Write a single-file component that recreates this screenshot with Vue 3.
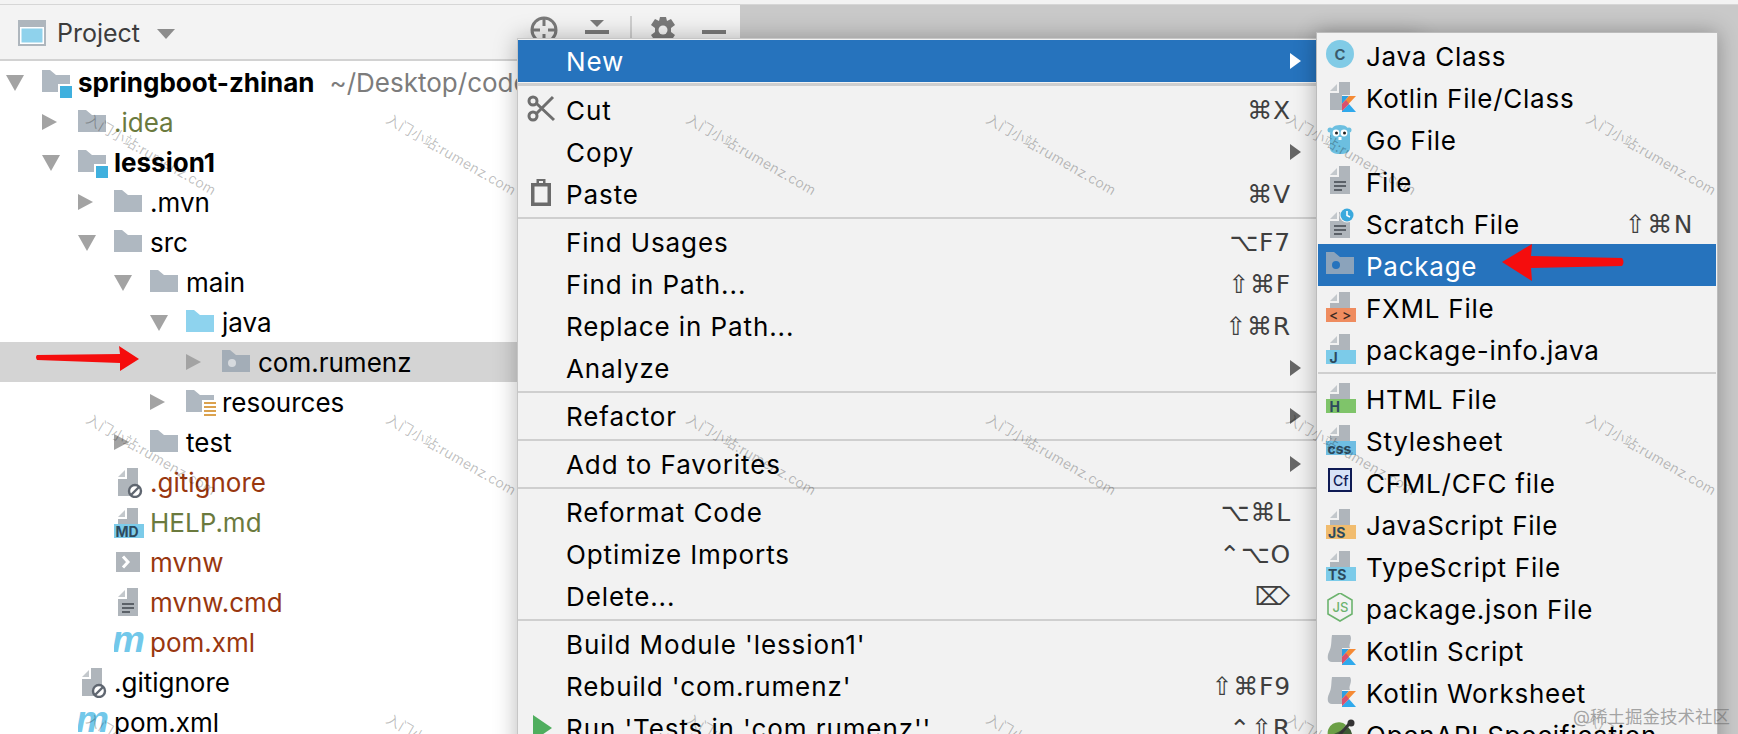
<script setup>
const tree = [
  { label: 'springboot-zhinan', depth: 0, arrow: 'down', icon: 'i-module', tone: 'strong', hint: '~/Desktop/code/springboot-zhinan' },
  { label: '.idea', depth: 1, arrow: 'right', icon: 'i-folder', tone: 'olive' },
  { label: 'lession1', depth: 1, arrow: 'down', icon: 'i-module', tone: 'strong' },
  { label: '.mvn', depth: 2, arrow: 'right', icon: 'i-folder' },
  { label: 'src', depth: 2, arrow: 'down', icon: 'i-folder' },
  { label: 'main', depth: 3, arrow: 'down', icon: 'i-folder' },
  { label: 'java', depth: 4, arrow: 'down', icon: 'i-folder-blue' },
  { label: 'com.rumenz', depth: 5, arrow: 'right', icon: 'i-package', selected: true },
  { label: 'resources', depth: 4, arrow: 'right', icon: 'i-resources' },
  { label: 'test', depth: 3, arrow: 'right', icon: 'i-folder' },
  { label: '.gitignore', depth: 2, icon: 'i-ignore', tone: 'rust' },
  { label: 'HELP.md', depth: 2, icon: 'i-md', tone: 'olive' },
  { label: 'mvnw', depth: 2, icon: 'i-shell', tone: 'rust' },
  { label: 'mvnw.cmd', depth: 2, icon: 'i-file', tone: 'rust' },
  { label: 'pom.xml', depth: 2, icon: 'i-maven', tone: 'rust' },
  { label: '.gitignore', depth: 1, icon: 'i-ignore' },
  { label: 'pom.xml', depth: 1, icon: 'i-maven' }
]

const menu = [
  { label: 'New', sub: true, active: true },
  { sep: true, first: true },
  { label: 'Cut', key: '⌘X', icon: 'i-cut' },
  { label: 'Copy', sub: true },
  { label: 'Paste', key: '⌘V', icon: 'i-paste' },
  { sep: true },
  { label: 'Find Usages', key: '⌥F7' },
  { label: 'Find in Path...', key: '⇧⌘F' },
  { label: 'Replace in Path...', key: '⇧⌘R' },
  { label: 'Analyze', sub: true },
  { sep: true },
  { label: 'Refactor', sub: true },
  { sep: true },
  { label: 'Add to Favorites', sub: true },
  { sep: true },
  { label: 'Reformat Code', key: '⌥⌘L' },
  { label: 'Optimize Imports', key: '⌃⌥O' },
  { label: 'Delete...', key: '⌦' },
  { sep: true },
  { label: "Build Module 'lession1'" },
  { label: "Rebuild 'com.rumenz'", key: '⇧⌘F9' },
  { label: "Run 'Tests in 'com.rumenz''", key: '⌃⇧R', icon: 'i-run' }
]

const submenu = [
  { label: 'Java Class', icon: 'i-class' },
  { label: 'Kotlin File/Class', icon: 'i-kotlin' },
  { label: 'Go File', icon: 'i-go' },
  { label: 'File', icon: 'i-file' },
  { label: 'Scratch File', icon: 'i-scratch', key: '⇧⌘N' },
  { label: 'Package', icon: 'i-package-active', active: true },
  { label: 'FXML File', icon: 'i-fxml' },
  { label: 'package-info.java', icon: 'i-pkginfo' },
  { sep: true },
  { label: 'HTML File', icon: 'i-html' },
  { label: 'Stylesheet', icon: 'i-css' },
  { label: 'CFML/CFC file', icon: 'i-cf' },
  { label: 'JavaScript File', icon: 'i-js' },
  { label: 'TypeScript File', icon: 'i-ts' },
  { label: 'package.json File', icon: 'i-json' },
  { label: 'Kotlin Script', icon: 'i-kts' },
  { label: 'Kotlin Worksheet', icon: 'i-kts' },
  { label: 'OpenAPI Specification', icon: 'i-openapi' }
]

const marks = []
for (const y of [110, 410, 710]) {
  for (const x of [92, 392, 692, 992, 1292, 1592]) marks.push({ x, y })
}
</script>

<template>
  <div class="screen">
    <svg class="defs" aria-hidden="true">
      <defs>
        <symbol id="i-page" viewBox="0 0 30 30">
          <path d="M4 11H13V0H24V28H4Z" fill="#afb5bb" />
          <path d="M4 9L11 2V9Z" fill="#c3c8cc" />
        </symbol>
        <symbol id="i-pagetop" viewBox="0 0 30 30">
          <path d="M4 11H13V0H24V16H4Z" fill="#afb5bb" />
          <path d="M4 9L11 2V9Z" fill="#c3c8cc" />
        </symbol>
        <symbol id="i-kbadge" viewBox="0 0 30 30">
          <path d="M16 14H23L16 22Z" fill="#2f9fe0" />
          <path d="M23 14H30L16 29V22Z" fill="#f58a34" />
          <path d="M16 29L23 22L30 30H16Z" fill="#2fa9ec" />
          <path d="M16 22L20 18L23 22L16 29Z" fill="#d9506e" />
        </symbol>
        <symbol id="i-folder" viewBox="0 0 30 30">
          <path d="M0 2H8L14 7H28V24H0Z" fill="#afb8c1" />
        </symbol>
        <symbol id="i-folder-blue" viewBox="0 0 30 30">
          <path d="M0 2H8L14 7H28V24H0Z" fill="#8ed3ee" />
        </symbol>
        <symbol id="i-module" viewBox="0 0 30 30">
          <path d="M0 2H8L14 7H28V24H0Z" fill="#afb8c1" />
          <rect x="16" y="16" width="14" height="14" fill="#fff" />
          <rect x="18" y="18" width="12" height="12" fill="#3fb0de" />
        </symbol>
        <symbol id="i-package" viewBox="0 0 30 30">
          <path d="M0 2H8L14 7H28V24H0Z" fill="#a3adb7" />
          <circle cx="10" cy="15" r="4" fill="#d6dade" />
        </symbol>
        <symbol id="i-package-active" viewBox="0 0 30 30">
          <path d="M0 2H8L14 7H28V24H0Z" fill="#8ba3bb" />
          <circle cx="10" cy="15" r="4" fill="#2673bd" />
        </symbol>
        <symbol id="i-resources" viewBox="0 0 30 30">
          <path d="M0 2H8L14 7H28V24H0Z" fill="#afb8c1" />
          <rect x="16" y="12" width="14" height="18" fill="#fff" />
          <path d="M18 15H30M18 19H30M18 23H30M18 27H30" stroke="#dba24e" stroke-width="2" />
        </symbol>
        <symbol id="i-file" viewBox="0 0 30 30">
          <use href="#i-page" width="30" height="30" />
          <path d="M8 16H20M8 20H20M8 24H16" stroke="#5b6168" stroke-width="2" />
        </symbol>
        <symbol id="i-ignore" viewBox="0 0 30 30">
          <use href="#i-page" width="30" height="30" />
          <circle cx="21" cy="23" r="6" fill="#fff" stroke="#5f6670" stroke-width="2.4" />
          <path d="M17 27L25 19" stroke="#5f6670" stroke-width="2.4" />
        </symbol>
        <symbol id="i-md" viewBox="0 0 30 30">
          <use href="#i-pagetop" width="30" height="30" />
          <rect y="16" width="30" height="14" fill="#7ccbe9" />
          <text x="1.500" y="28.500" class="badge-text">MD</text>
        </symbol>
        <symbol id="i-shell" viewBox="0 0 30 30">
          <rect x="2" y="4" width="24" height="20" fill="#afb5bb" />
          <path d="M9 8.500L14 14L9 19.500" fill="none" stroke="#fff" stroke-width="3" />
        </symbol>
        <symbol id="i-maven" viewBox="0 0 30 30">
          <text x="-2" y="24" class="maven-text">m</text>
        </symbol>
        <symbol id="i-class" viewBox="0 0 30 30">
          <circle cx="14" cy="14" r="14" fill="#81cbe6" />
          <text x="14" y="19.500" class="class-text">c</text>
        </symbol>
        <symbol id="i-kotlin" viewBox="0 0 30 30">
          <path d="M4 11H13V0H24V13H16V28H4Z" fill="#afb5bb" />
          <path d="M4 9L11 2V9Z" fill="#c3c8cc" />
          <use href="#i-kbadge" width="30" height="30" />
        </symbol>
        <symbol id="i-kts" viewBox="0 0 30 30">
          <path d="M6 0H24C27 5 22 9 24 13H16V27H6C1 27 1 21 3 17C6 11 5 6 6 0Z" fill="#afb5bb" />
          <use href="#i-kbadge" width="30" height="30" />
        </symbol>
        <symbol id="i-go" viewBox="0 0 30 30">
          <circle cx="4" cy="6" r="2.500" fill="#6cbfe0" />
          <circle cx="23" cy="6" r="2.500" fill="#6cbfe0" />
          <path d="M4 11C4 4 8 1 14 1C20 1 24 4 24 11V24C24 28 20 30 14 30C8 30 4 28 4 24Z" fill="#6cbfe0" />
          <circle cx="10" cy="9" r="3.400" fill="#fff" />
          <circle cx="18" cy="9" r="3.400" fill="#fff" />
          <circle cx="10.500" cy="9" r="1.500" fill="#222" />
          <circle cx="18.500" cy="9" r="1.500" fill="#222" />
          <rect x="12.500" y="13" width="3" height="3" fill="#fff" />
        </symbol>
        <symbol id="i-scratch" viewBox="0 0 30 30">
          <path d="M4 13H13V4H24V30H4Z" fill="#afb5bb" />
          <path d="M4 11L11 4V11Z" fill="#c3c8cc" />
          <path d="M8 18H20M8 22H20M8 26H16" stroke="#5b6168" stroke-width="2" />
          <circle cx="21" cy="7" r="7.500" fill="#f2f2f2" />
          <circle cx="21" cy="7" r="6.500" fill="#3aa9dd" />
          <path d="M21 3V7.500L24 9" fill="none" stroke="#fff" stroke-width="1.600" />
        </symbol>
        <symbol id="i-fxml" viewBox="0 0 30 30">
          <use href="#i-pagetop" width="30" height="30" />
          <rect y="16" width="30" height="14" fill="#ef8c5f" />
          <text x="3" y="28" class="angle-text">&lt; &gt;</text>
        </symbol>
        <symbol id="i-pkginfo" viewBox="0 0 30 30">
          <use href="#i-pagetop" width="30" height="30" />
          <rect y="16" width="30" height="14" fill="#7ccbe9" />
          <text x="3.500" y="28.500" class="badge-text">J</text>
        </symbol>
        <symbol id="i-html" viewBox="0 0 30 30">
          <use href="#i-pagetop" width="30" height="30" />
          <rect y="16" width="30" height="14" fill="#7fc46a" />
          <text x="3.500" y="28.500" class="badge-text">H</text>
        </symbol>
        <symbol id="i-css" viewBox="0 0 30 30">
          <use href="#i-pagetop" width="30" height="30" />
          <rect y="16" width="30" height="14" fill="#6fbde2" />
          <text x="1.500" y="28.500" class="badge-text">css</text>
        </symbol>
        <symbol id="i-js" viewBox="0 0 30 30">
          <use href="#i-pagetop" width="30" height="30" />
          <rect y="16" width="30" height="14" fill="#f1bc6e" />
          <text x="2" y="28.500" class="badge-text">JS</text>
        </symbol>
        <symbol id="i-ts" viewBox="0 0 30 30">
          <use href="#i-pagetop" width="30" height="30" />
          <rect y="16" width="30" height="14" fill="#7ccbe9" />
          <text x="2" y="28.500" class="badge-text">TS</text>
        </symbol>
        <symbol id="i-cf" viewBox="0 0 30 30">
          <rect x="3" y="2" width="22" height="22" fill="#d7e3f7" stroke="#0e1a54" stroke-width="2" />
          <text x="7" y="19" class="cf-text">Cf</text>
        </symbol>
        <symbol id="i-json" viewBox="0 0 30 30">
          <path d="M14 0L26 7V21L14 28L2 21V7Z" fill="none" stroke="#6cb36e" stroke-width="1.600" />
          <text x="6.500" y="19" class="json-text">JS</text>
        </symbol>
        <symbol id="i-openapi" viewBox="0 0 30 30">
          <path d="M2 17A11 11 0 0 1 20 6L13 15Z" fill="#6b9f45" />
          <path d="M22 8A11 11 0 0 1 26 18V30H2V18Z" fill="#3e5a34" />
          <path d="M6 24L24 4" stroke="#333" stroke-width="3" />
          <circle cx="25" cy="4" r="3.500" fill="#333" />
        </symbol>
        <symbol id="i-cut" viewBox="0 0 30 30">
          <circle cx="6" cy="6" r="4" fill="none" stroke="#6e6e6e" stroke-width="3" />
          <circle cx="6" cy="21" r="4" fill="none" stroke="#6e6e6e" stroke-width="3" />
          <path d="M9 8L27 25M9 19L26 2" stroke="#6e6e6e" stroke-width="3" />
        </symbol>
        <symbol id="i-paste" viewBox="0 0 30 30">
          <path d="M5.750 5.750H22.250V25.250H5.750Z" fill="none" stroke="#6b6b6b" stroke-width="3.500" />
          <rect x="9.500" y="0" width="9" height="6" fill="#6b6b6b" />
          <rect x="12" y="2" width="4" height="2" fill="#f2f2f2" />
        </symbol>
        <symbol id="i-run" viewBox="0 0 30 30">
          <path d="M6 2L25 15L6 28Z" fill="#4fae5e" />
        </symbol>
      </defs>
    </svg>

    <div class="topline"></div>
    <div class="workspace">
      <section class="panel">
        <header class="panel-head">
          <svg class="project-icon" width="28" height="26" viewBox="0 0 28 26">
            <rect width="28" height="26" fill="#aeb6bd" />
            <rect x="2" y="7" width="24" height="17" fill="#fff" />
            <rect x="3.500" y="8.500" width="21" height="14" fill="#8fd2ec" />
          </svg>
          <span class="project-label">Project</span>
          <span class="drop"></span>
          <svg class="tool tool-target" width="28" height="30" viewBox="0 0 28 30">
            <circle cx="14" cy="15" r="12" fill="none" stroke="#7a7a7a" stroke-width="3" />
            <path d="M14 3V11M14 19V27M2 15H10M18 15H26" stroke="#7a7a7a" stroke-width="3" />
          </svg>
          <svg class="tool tool-collapse" width="24" height="30" viewBox="0 0 24 30">
            <path d="M5 5H19L12 12Z" fill="#7a7a7a" />
            <rect y="15" width="24" height="4" fill="#7a7a7a" />
            <path d="M9 27L12 24L15 27Z" fill="#7a7a7a" />
          </svg>
          <span class="tool-sep"></span>
          <svg class="tool tool-gear" width="26" height="28" viewBox="0 0 26 28">
            <path d="M10 1H16L17 5L21 3L25 9L21 12V16L25 19L21 25L17 23L16 27H10L9 23L5 25L1 19L5 16V12L1 9L5 3L9 5Z" fill="#7a7a7a" />
            <circle cx="13" cy="14" r="4.500" fill="#f3f3f3" />
          </svg>
          <span class="tool-min"></span>
        </header>
        <ul class="tree">
          <li
            v-for="(row, i) in tree"
            :key="i"
            class="tree-row"
            :class="{ selected: row.selected }"
            :style="{ paddingLeft: row.depth * 36 + 6 + 'px' }"
          >
            <span class="twist" :class="row.arrow"></span>
            <svg class="tree-icon" width="30" height="30"><use :href="'#' + row.icon" width="30" height="30" /></svg>
            <span class="tree-label" :class="row.tone">{{ row.label }}</span>
            <span v-if="row.hint" class="tree-hint">{{ row.hint }}</span>
          </li>
        </ul>
      </section>
    </div>

    <div class="menu">
      <template v-for="(item, i) in menu" :key="i">
        <div v-if="item.sep" class="sep" :class="{ first: item.first }"></div>
        <div v-else class="item" :class="{ active: item.active }">
          <svg v-if="item.icon" class="item-icon" width="30" height="30"><use :href="'#' + item.icon" width="30" height="30" /></svg>
          <span class="item-label">{{ item.label }}</span>
          <span v-if="item.key" class="item-key">{{ item.key }}</span>
          <span v-if="item.sub" class="item-arrow"></span>
        </div>
      </template>
    </div>

    <div class="submenu">
      <template v-for="(item, i) in submenu" :key="i">
        <div v-if="item.sep" class="sub-sep"></div>
        <div v-else class="sub-item" :class="{ active: item.active }">
          <svg class="sub-icon" width="30" height="30"><use :href="'#' + item.icon" width="30" height="30" /></svg>
          <span class="sub-label">{{ item.label }}</span>
          <span v-if="item.key" class="sub-key">{{ item.key }}</span>
        </div>
      </template>
    </div>

    <svg class="annotations" width="1738" height="734" viewBox="0 0 1738 734">
      <path d="M37 355L120 354L119 346L139 359L120 371L120 363L37 360Q35 357 37 355Z" fill="#f50d0d" />
      <path d="M1502 262L1532 244L1531 256L1622 258Q1625 262 1622 266L1531 268L1532 281Z" fill="#f50d0d" />
    </svg>

    <span
      v-for="(m, i) in marks"
      :key="'m' + i"
      class="mark"
      :style="{ left: m.x + 'px', top: m.y + 'px' }"
    >入门小站:rumenz.com</span>
    <span class="credit">@稀土掘金技术社区</span>
  </div>
</template>

<style scoped>
.screen {
  position: relative;
  width: 1738px;
  height: 734px;
  overflow: hidden;
  background: #c9c9c9;
  font-family: Inter, "Noto Sans", "Noto Sans CJK SC", "DejaVu Sans", sans-serif;
  color: #000;
}
.defs {
  position: absolute;
  width: 0;
  height: 0;
}
.badge-text {
  font: 700 14px Inter, sans-serif;
  fill: #2c4a5e;
}
.angle-text {
  font: 500 14px Inter, sans-serif;
  fill: #3a2a22;
}
.maven-text {
  font: italic 700 37px "Liberation Sans", sans-serif;
  fill: #72c8ea;
}
.class-text {
  font: 500 20px Inter, sans-serif;
  fill: #3a5a6b;
  text-anchor: middle;
}
.cf-text {
  font: 500 14px Inter, sans-serif;
  fill: #0e1a54;
}
.json-text {
  font: 500 13px Inter, sans-serif;
  fill: #6cb36e;
}
.topline {
  height: 4px;
  background: #f3f3f3;
  border-bottom: 1px solid #d6d6d6;
}
.workspace {
  display: flex;
  height: 729px;
}
.panel {
  width: 740px;
  background: #fff;
}
.panel-head {
  display: flex;
  align-items: center;
  height: 54px;
  padding-left: 18px;
  background: #f3f3f3;
  border-bottom: 2px solid #d2d2d2;
}
.project-icon {
  flex: none;
  margin-top: 2px;
}
.project-label {
  margin-left: 11px;
  padding-top: 1px;
  font-size: 25px;
  color: #3c3c3c;
}
.drop {
  margin-left: 17px;
  margin-top: 4px;
  border-style: solid;
  border-width: 10px 9px 0;
  border-color: #8c8c8c transparent transparent;
}
.tool {
  flex: none;
  margin-top: -4px;
}
.tool-target {
  margin-left: 355px;
}
.tool-collapse {
  margin-left: 27px;
}
.tool-sep {
  width: 2px;
  height: 28px;
  margin-left: 21px;
  margin-top: -4px;
  background: #cfcfcf;
}
.tool-gear {
  margin-left: 18px;
}
.tool-min {
  width: 24px;
  height: 4px;
  margin-left: 26px;
  background: #7a7a7a;
}
.tree {
  margin: 0;
  padding: 1px 0 0;
  list-style: none;
}
.tree-row {
  display: flex;
  align-items: center;
  height: 40px;
  white-space: nowrap;
  font-size: 26px;
}
.tree-row.selected {
  background: #d4d4d4;
}
.twist {
  flex: none;
  width: 36px;
}
.twist.down::before {
  content: "";
  display: block;
  width: 0;
  margin-top: 1px;
  border-style: solid;
  border-width: 16px 9px 0;
  border-color: #a3a3a3 transparent transparent;
}
.twist.right::before {
  content: "";
  display: block;
  width: 0;
  border-style: solid;
  border-width: 8px 0 8px 15px;
  border-color: transparent transparent transparent #a3a3a3;
}
.tree-icon {
  flex: none;
  margin-top: 2px;
  margin-right: 6px;
}
.tree-label,
.tree-hint {
  padding-top: 1px;
}
.tree-label.strong {
  font-weight: 700;
}
.tree-label.olive {
  color: #6b7a3e;
}
.tree-label.rust {
  color: #99370f;
}
.tree-hint {
  margin-left: 15px;
  color: #7c7c7c;
}
.menu {
  position: absolute;
  left: 517px;
  top: 38px;
  width: 900px;
  height: 720px;
  padding-top: 1px;
  background: #f2f2f2;
  border: 1px solid #c6c6c6;
  box-shadow: 0 0 22px rgba(0, 0, 0, 0.28);
  font-size: 26px;
}
.item {
  position: relative;
  display: flex;
  align-items: center;
  width: 798px;
  height: 42px;
  padding-left: 48px;
  padding-right: 15px;
  box-sizing: border-box;
  white-space: nowrap;
}
.item.active {
  background: #2673bd;
  color: #fff;
}
.item-icon {
  position: absolute;
  left: 9px;
  top: 6px;
}
.item-label {
  flex: 1;
  letter-spacing: 0.9px;
}
.item-key {
  margin-right: 10px;
  color: #3f3f3f;
  font-family: "DejaVu Sans", sans-serif;
  font-size: 25px;
  letter-spacing: 0.8px;
}
.item-arrow {
  flex: none;
  border-style: solid;
  border-width: 8px 0 8px 11px;
  border-color: transparent transparent transparent #666;
}
.item.active .item-arrow {
  border-left-color: #fff;
}
.sep {
  width: 798px;
  height: 6px;
  padding-top: 2px;
  box-sizing: border-box;
}
.sep::before {
  content: "";
  display: block;
  height: 2px;
  background: #cfcfcf;
}
.sep.first {
  height: 7px;
  padding-top: 1px;
}
.sep.first::before {
  height: 3px;
}
.submenu {
  position: absolute;
  left: 1316px;
  top: 32px;
  width: 398px;
  height: 720px;
  padding: 1px;
  background: #f2f2f2;
  border: 1px solid #bcbcbc;
  box-shadow: 0 0 20px rgba(0, 0, 0, 0.3);
  font-size: 26px;
}
.sub-item {
  display: flex;
  align-items: center;
  height: 42px;
  padding: 0 22px 0 8px;
  white-space: nowrap;
}
.sub-item.active {
  background: #2673bd;
  color: #fff;
}
.sub-icon {
  flex: none;
  margin-right: 10px;
}
.sub-label {
  flex: 1;
  padding-top: 2px;
  letter-spacing: 0.75px;
}
.sub-key {
  padding-top: 2px;
  color: #3f3f3f;
  font-family: "DejaVu Sans", sans-serif;
  font-size: 25px;
  letter-spacing: 1.5px;
}
.sub-sep {
  height: 7px;
  padding-top: 2px;
  box-sizing: border-box;
}
.sub-sep::before {
  content: "";
  display: block;
  height: 2px;
  background: #cfcfcf;
}
.annotations {
  position: absolute;
  left: 0;
  top: 0;
  pointer-events: none;
}
.mark {
  position: absolute;
  font-size: 14px;
  line-height: 18px;
  letter-spacing: 0.3px;
  color: rgba(0, 0, 0, 0.26);
  white-space: nowrap;
  transform: rotate(30deg);
  transform-origin: 0 0;
  pointer-events: none;
}
.credit {
  position: absolute;
  left: 1573px;
  top: 706px;
  font-size: 17.500px;
  line-height: 22px;
  color: rgba(110, 110, 110, 0.6);
  white-space: nowrap;
}
</style>
